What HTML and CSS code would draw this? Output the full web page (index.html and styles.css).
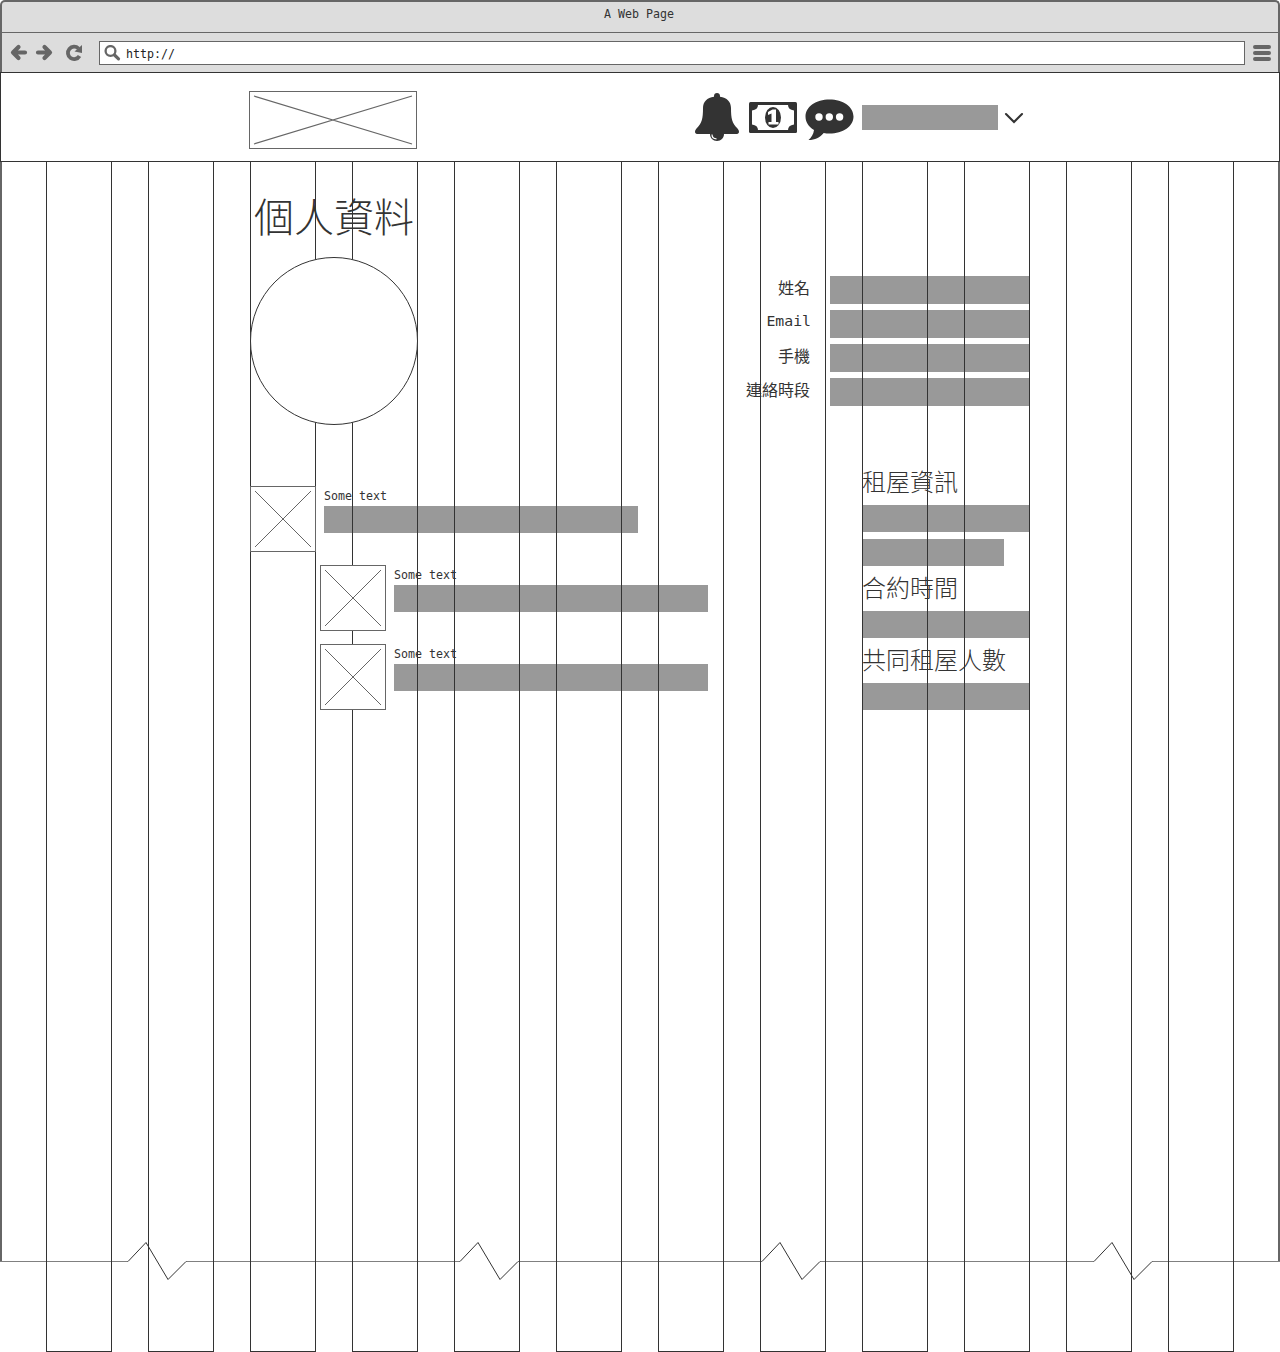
FILE: index.html
```html
<!DOCTYPE html>
<html lang="zh-Hant">
<head>
<meta charset="utf-8">
<title>A Web Page</title>
<link rel="stylesheet" href="styles.css">
</head>
<body>
<div class="window">
  <div class="chrome">
    <div class="titlebar">A Web Page</div>
    <div class="toolbar">
      <svg class="nav" width="92" height="38" viewBox="0 33 92 38">
        <g fill="none" stroke="#666" stroke-width="4.2" stroke-linecap="round" stroke-linejoin="round">
          <path d="M25 52.500H14M18.500 47l-5.500 5.500 5.500 5.500"/>
          <path d="M38 52.500H49M44.500 47l5.500 5.500-5.500 5.500"/>
          <path d="M79.500 56A6.200 6.200 0 1 1 78.500 48.500" stroke-width="3.800" stroke-linecap="butt"/>
        </g>
        <path d="M82 45V53L74.500 51.500Z" fill="#666"/>
      </svg>
      <div class="address">
        <svg width="18" height="18" viewBox="0 0 18 18" fill="none" stroke="#666"><circle cx="6.500" cy="6" r="4.900" stroke-width="2.300"/><path d="M10.500 10l4 3.800" stroke-width="3.200" stroke-linecap="round"/></svg>
        <span>http://</span>
      </div>
      <svg class="menu" width="20" height="18" viewBox="0 0 20 18" stroke="#666" stroke-width="4" stroke-linecap="round"><path d="M3 3h14M3 9h14M3 15h14"/></svg>
    </div>
  </div>

  <header class="header">
    <svg class="logo" width="168" height="58" viewBox="0 0 168 58" fill="none" stroke="#666"><rect x=".5" y=".5" width="167" height="57"/><path d="M5 5L163 53M5 53L163 5" stroke-width="1.200"/></svg>
    <div class="actions">
      <svg width="44" height="48" viewBox="0 0 44 48"><path fill="#333" d="M22 0c1.800 0 3 1.200 3 3v.7C32 4.500 36 9 36 15c0 11 1 15 6.500 20.500C45 38.500 44 41 42 41H29c0 4-3 7-7 7s-7-3-7-7H2c-2 0-3-2.500-.5-5.500C7 30 8 26 8 15 8 9 12 4.500 19 3.700V3c0-1.800 1.200-3 3-3z"/><path d="M17 41.500c0 2.700 2 4.300 4.500 4.300" fill="none" stroke="#fff" stroke-width="1.200"/></svg>
      <svg class="money" width="48" height="48" viewBox="0 0 48 48"><rect y="9" width="48" height="31" rx="1.500" fill="#333"/><path fill="#fff" d="M9 12h30c0 3 2 5 6 5.500v14c-4 .5-6 2.500-6 5.500H9c0-3-2-5-6-5.500v-14c4-.5 6-2.500 6-5.500z"/><ellipse cx="24" cy="24.500" rx="8" ry="10.500" fill="#333"/><path fill="#fff" d="M19 19l4.500-2.500h3.500v12.500h2.500v2.500h-10v-2.500h3V20.500l-3.500 1.500z"/></svg>
      <svg class="chat" width="49" height="48" viewBox="0 0 49 48"><path fill="#333" d="M24.500 6.500c13.500 0 24 7.300 24 17s-10.500 17-24 17c-2 0-4-.1-5.800-.5C15 44.500 10 47 3.500 47c3-2.500 5-6 5.500-10C3.500 33.800.5 29 .5 23.500c0-9.700 10.500-17 24-17z"/><g fill="#fff"><circle cx="14" cy="24" r="3.700"/><circle cx="24.300" cy="24" r="3.700"/><circle cx="34.600" cy="24" r="3.700"/></g></svg>
      <div class="bar user"></div>
      <svg class="chevron" width="20" height="48" viewBox="0 0 20 48"><path d="M2 21l8 8 8-8" fill="none" stroke="#333" stroke-width="2.100" stroke-linecap="round"/></svg>
    </div>
  </header>

  <main class="main">
    <section class="left">
      <h1>個人資料</h1>
      <svg class="avatar" width="168" height="168" viewBox="0 0 168 168"><circle cx="84" cy="84" r="83.500" fill="#fff" stroke="#333"/></svg>
      <div class="posts">
        <article class="post">
          <svg class="thumb" width="66" height="66" viewBox="0 0 66 66"><rect x=".5" y=".5" width="65" height="65" fill="#fff" stroke="#666"/><path d="M5 5L61 61M61 5L5 61" stroke="#666"/></svg>
          <div class="body"><p>Some text</p><div class="bar"></div></div>
        </article>
        <article class="post reply">
          <svg class="thumb" width="66" height="66" viewBox="0 0 66 66"><rect x=".5" y=".5" width="65" height="65" fill="#fff" stroke="#666"/><path d="M5 5L61 61M61 5L5 61" stroke="#666"/></svg>
          <div class="body"><p>Some text</p><div class="bar"></div></div>
        </article>
        <article class="post reply">
          <svg class="thumb" width="66" height="66" viewBox="0 0 66 66"><rect x=".5" y=".5" width="65" height="65" fill="#fff" stroke="#666"/><path d="M5 5L61 61M61 5L5 61" stroke="#666"/></svg>
          <div class="body"><p>Some text</p><div class="bar"></div></div>
        </article>
      </div>
    </section>
    <section class="right">
      <div class="fields">
        <div class="field"><span>姓名</span><div class="bar"></div></div>
        <div class="field"><span class="latin">Email</span><div class="bar"></div></div>
        <div class="field"><span>手機</span><div class="bar"></div></div>
        <div class="field"><span>連絡時段</span><div class="bar"></div></div>
      </div>
      <aside class="info">
        <h2>租屋資訊</h2>
        <div class="bar"></div>
        <div class="bar short"></div>
        <h2>合約時間</h2>
        <div class="bar"></div>
        <h2>共同租屋人數</h2>
        <div class="bar"></div>
      </aside>
    </section>
  </main>
  <svg class="tear" width="1280" height="40" viewBox="0 1241 1280 40" fill="none">
    <path stroke="#808080" d="M0 1261.500H128M186 1261.500H460M518 1261.500H762M820 1261.500H1094M1152 1261.500H1280"/>
    <path stroke="#333" d="M128 1261.500L146 1242.500L168 1279.500L186 1261.500M460 1261.500L478 1242.500L500 1279.500L518 1261.500M762 1261.500L780 1242.500L802 1279.500L820 1261.500M1094 1261.500L1112 1242.500L1134 1279.500L1152 1261.500"/>
  </svg>
  <div class="grid" aria-hidden="true"><i></i><i></i><i></i><i></i><i></i><i></i><i></i><i></i><i></i><i></i><i></i><i></i></div>
</div>
</body>
</html>
```
FILE: styles.css
```css
* { box-sizing: border-box; }
body {
  margin: 0;
  background: #fff;
  color: #333;
  font-family: "DejaVu Sans Mono", "Noto Sans CJK TC", monospace;
  font-size: 11.63px;
}
svg { display: block; flex: none; }
h1, h2, p { margin: 0; }
.window { position: relative; width: 1280px; height: 1352px; overflow: hidden; }

.chrome {
  height: 72px;
  border: 2px solid #666;
  border-bottom: 0;
  border-radius: 5px 5px 0 0;
  background: #ddd;
}
.titlebar { height: 31px; border-bottom: 1px solid #666; text-align: center; line-height: 24px; padding-right: 2px; }
.toolbar { display: flex; height: 39px; }
.nav { margin-left: -2px; }
.address {
  display: flex;
  flex: 1;
  height: 24px;
  margin: 8px 0 0 7px;
  padding: 3px 0 0 4px;
  border: 1px solid #666;
  background: #fff;
  color: #222;
}
.address span { margin-left: 4px; line-height: 18px; }
.menu { margin: 11px 6px 0 7px; }

.header {
  display: flex;
  justify-content: space-between;
  height: 90px;
  padding: 18px 255px 0 248px;
  border: 1px solid #333;
  background: #fff;
}
.actions { display: flex; margin-top: 2px; }
.money { margin-left: 10px; }
.chat { margin-left: 8px; }
.bar { background: #999; }
.user { width: 136px; height: 25px; margin: 12px 0 0 8px; }
.chevron { margin-left: 6px; }

.main {
  display: flex;
  justify-content: space-between;
  height: 1099px;
  padding: 0 248px;
  border: solid #666;
  border-width: 0 2px;
}
.left { padding-top: 29px; }
h1 { margin-left: 4px; font: 300 40px/48px "Noto Sans CJK TC", sans-serif; }
.avatar { position: relative; z-index: 2; margin-top: 18px; }
.posts { display: flex; flex-direction: column; gap: 13px; margin-top: 61px; }
.post { display: flex; gap: 8px; }
.reply { margin-left: 70px; }
.thumb { position: relative; z-index: 2; }
.post p { height: 20px; line-height: 20px; }
.post .bar { width: 314px; height: 27px; }

.right { padding-top: 114px; }
.fields { display: flex; flex-direction: column; gap: 6px; }
.field { display: flex; justify-content: flex-end; gap: 20px; }
.field span { font: 400 16px/22px "Noto Sans CJK TC", sans-serif; }
.field .latin { margin-right: -1px; font: 14.8px/21px "DejaVu Sans Mono", monospace; }
.field .bar { width: 200px; height: 28px; }
.info { width: 167px; margin: 54px 0 0 auto; }
.info .bar { height: 27px; }
.info .short { width: 141px; margin-top: 7px; }
.info h2 { height: 45px; margin-left: -1px; font: 300 24px/41px "Noto Sans CJK TC", sans-serif; white-space: nowrap; }

.tear { margin-top: -20px; }
.grid {
  position: absolute;
  z-index: 1;
  top: 162px;
  left: 46px;
  display: flex;
  gap: 36px;
  height: 1190px;
}
.grid i { width: 66px; border: 1px solid #333; border-top: 0; }
```
